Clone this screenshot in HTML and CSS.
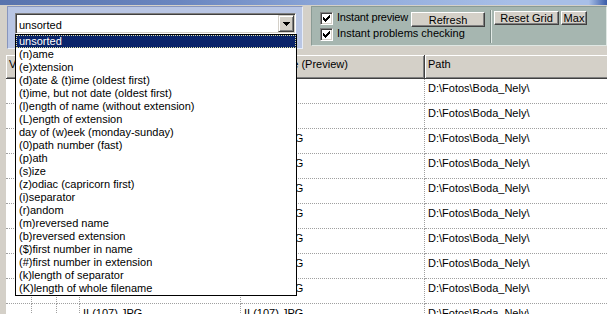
FILE: index.html
```html
<!DOCTYPE html>
<html>
<head>
<meta charset="utf-8">
<link rel="stylesheet" href="styles.css">
</head>
<body>
<div class="titlebar"></div>
<div class="toolbar">
  <div class="panel-sort">
    <div class="combo-wrap">
      <div class="combo">
        <span class="combo-text">unsorted</span>
        <span class="combo-btn"><svg width="14" height="15" viewBox="0 0 14 15"><path d="M4 6h7v1h-1v1h-1v1h-1v1h-1v-1h-1v-1h-1v-1h-1z" fill="#000"/></svg></span>
      </div>
      <ul class="dropdown">
        <li class="sel">unsorted</li>
        <li>(n)ame</li>
        <li>(e)xtension</li>
        <li>(d)ate &amp; (t)ime (oldest first)</li>
        <li>(t)ime, but not date (oldest first)</li>
        <li>(l)ength of name (without extension)</li>
        <li>(L)ength of extension</li>
        <li>day of (w)eek (monday-sunday)</li>
        <li>(0)path number (fast)</li>
        <li>(p)ath</li>
        <li>(s)ize</li>
        <li>(z)odiac (capricorn first)</li>
        <li>(i)separator</li>
        <li>(r)andom</li>
        <li>(m)reversed name</li>
        <li>(b)reversed extension</li>
        <li>($)first number in name</li>
        <li>(#)first number in extension</li>
        <li>(k)length of separator</li>
        <li>(K)length of whole filename</li>
      </ul>
    </div>
  </div>
  <div class="panel-opts">
    <div class="opts-left">
      <div class="opt-row">
        <span class="cb"><svg width="13" height="13" viewBox="0 0 13 13"><path d="M3 5h1v1h1v1h1v-1h1v-1h1v-1h1v-1h1v3h-1v1h-1v1h-1v1h-1v1h-1v-1h-1v-1h-1z" fill="#000"/></svg></span>
        <span class="opt-label opt-label-short">Instant preview</span>
        <button class="btn btn-refresh">Refresh</button>
      </div>
      <div class="opt-row opt-row2">
        <span class="cb"><svg width="13" height="13" viewBox="0 0 13 13"><path d="M3 5h1v1h1v1h1v-1h1v-1h1v-1h1v-1h1v3h-1v1h-1v1h-1v1h-1v1h-1v-1h-1v-1h-1z" fill="#000"/></svg></span>
        <span class="opt-label">Instant problems checking</span>
      </div>
    </div>
    <div class="opts-div"></div>
    <div class="opts-right">
      <button class="btn btn-reset">Reset Grid</button>
      <button class="btn btn-max">Max</button>
    </div>
  </div>
</div>
<div class="grid">
  <div class="row head">
    <div class="cell">V</div><div class="cell"></div><div class="cell"></div><div class="cell">Old Name</div><div class="cell">New Name (Preview)</div><div class="cell">Path</div>
  </div>
  <div class="row"><div class="cell"></div><div class="cell"></div><div class="cell"></div><div class="cell"></div><div class="cell"></div><div class="cell">D:\Fotos\Boda_Nely\</div></div>
  <div class="row"><div class="cell"></div><div class="cell"></div><div class="cell"></div><div class="cell"></div><div class="cell"></div><div class="cell">D:\Fotos\Boda_Nely\</div></div>
  <div class="row"><div class="cell"></div><div class="cell"></div><div class="cell"></div><div class="cell"></div><div class="cell">II (100).JPG</div><div class="cell">D:\Fotos\Boda_Nely\</div></div>
  <div class="row"><div class="cell"></div><div class="cell"></div><div class="cell"></div><div class="cell"></div><div class="cell">II (101).JPG</div><div class="cell">D:\Fotos\Boda_Nely\</div></div>
  <div class="row"><div class="cell"></div><div class="cell"></div><div class="cell"></div><div class="cell"></div><div class="cell">II (102).JPG</div><div class="cell">D:\Fotos\Boda_Nely\</div></div>
  <div class="row"><div class="cell"></div><div class="cell"></div><div class="cell"></div><div class="cell"></div><div class="cell">II (103).JPG</div><div class="cell">D:\Fotos\Boda_Nely\</div></div>
  <div class="row"><div class="cell"></div><div class="cell"></div><div class="cell"></div><div class="cell"></div><div class="cell">II (104).JPG</div><div class="cell">D:\Fotos\Boda_Nely\</div></div>
  <div class="row"><div class="cell"></div><div class="cell"></div><div class="cell"></div><div class="cell"></div><div class="cell">II (105).JPG</div><div class="cell">D:\Fotos\Boda_Nely\</div></div>
  <div class="row"><div class="cell"></div><div class="cell"></div><div class="cell"></div><div class="cell"></div><div class="cell">II (106).JPG</div><div class="cell">D:\Fotos\Boda_Nely\</div></div>
  <div class="row"><div class="cell"></div><div class="cell"></div><div class="cell"></div><div class="cell">II (107).JPG</div><div class="cell">II (107).JPG</div><div class="cell">D:\Fotos\Boda_Nely\</div></div>
</div>
</body>
</html>
```
FILE: styles.css
```css
* { box-sizing: border-box; }
html, body { margin: 0; padding: 0; }
body {
  width: 607px;
  height: 314px;
  overflow: hidden;
  background: #d4d0c8;
  color: #000;
  font: 11px/13px "Liberation Sans", Arial, sans-serif;
}
.titlebar {
  height: 5px;
  background: linear-gradient(90deg, #5873ad 0%, #6a86c0 30%, #8ea8d9 55%, #a8bfe7 85%, #a8bfe7 97%, #3a5ca8 100%);
}
.toolbar {
  display: flex;
  align-items: flex-start;
  padding-top: 1px;
}
.panel-sort {
  margin-left: 7px;
  width: 296px;
  height: 43px;
  background: #b9c6e4;
  border: 1px solid;
  border-color: #8795bd #e6ecf8 #e6ecf8 #8795bd;
  padding: 6px 0 0 7px;
}
.combo-wrap {
  position: relative;
  width: 281px;
}
.combo {
  display: flex;
  height: 21px;
  background: #fff;
  border: 1px solid;
  border-color: #808080 #fff #fff #808080;
  box-shadow: inset 1px 1px #404040, inset -1px -1px #d4d0c8;
  padding: 1px;
}
.combo-text {
  flex: 1;
  padding: 4px 0 0 2px;
  white-space: nowrap;
}
.combo-btn {
  width: 16px;
  height: 17px;
  background: #d4d0c8;
  border: 1px solid;
  border-color: #d4d0c8 #404040 #404040 #d4d0c8;
  box-shadow: inset 1px 1px #fff, inset -1px -1px #808080;
}
.combo-btn svg { display: block; }
.dropdown {
  position: absolute;
  left: 0;
  top: 21px;
  width: 282px;
  margin: 0;
  padding: 0;
  list-style: none;
  background: #fff;
  border: 1px solid #000;
  z-index: 5;
}
.dropdown li {
  height: 13px;
  padding-left: 3px;
  white-space: nowrap;
}
.dropdown li.sel {
  background: #0a246a;
  color: #fff;
  outline: 1px dotted #e0e0a0;
  outline-offset: -1px;
}
.panel-opts {
  margin-left: 8px;
  flex: 1;
  height: 40px;
  display: flex;
  background: #a6b6b0;
  border: 1px solid;
  border-color: #8a9b95 #dfe7e3 #dfe7e3 #8a9b95;
}
.opts-left {
  flex: none;
  width: 178px;
  padding: 5px 5px 0 8px;
}
.opt-row {
  display: flex;
  align-items: flex-start;
  height: 15px;
}
.opt-row2 { margin-top: 1px; }
.cb {
  flex: none;
  width: 13px;
  height: 13px;
  background: #fff;
  border: 1px solid;
  border-color: #808080 #fff #fff #808080;
  box-shadow: inset 1px 1px #404040, inset -1px -1px #d4d0c8;
}
.cb svg { display: block; margin: -1px; }
.opt-label {
  margin-left: 4px;
  margin-top: -1px;
  white-space: nowrap;
}
.opt-label-short {
  flex: 0 1 auto;
  min-width: 0;
  letter-spacing: -0.2px;
}
.opts-div {
  flex: none;
  width: 2px;
  margin: 3px 0 2px;
  border-left: 1px solid #7c8c87;
  border-right: 1px solid #e2eae6;
}
.opts-right {
  display: flex;
  gap: 2px;
  padding: 4px 0 0 2px;
}
.btn {
  flex: none;
  margin: 0;
  padding: 0;
  font: 11px/12px "Liberation Sans", Arial, sans-serif;
  color: #000;
  background: #d4d0c8;
  border: 1px solid;
  border-color: #fff #404040 #404040 #fff;
  box-shadow: inset -1px -1px #808080;
  border-radius: 0;
}
.btn-refresh { width: 74px; height: 15px; margin-left: auto; }
.btn-reset { width: 65px; height: 14px; }
.btn-max { width: 26px; height: 14px; }
.grid {
  margin: 6px 0 0 6px;
}
.row {
  display: grid;
  grid-template-columns: 26px 25px 23px 161px 184px 200px;
}
.cell {
  height: 25px;
  padding: 3px 3px 0;
  background: #fff;
  border-right: 1px dotted #a0a0a0;
  border-bottom: 1px dotted #a0a0a0;
  white-space: nowrap;
  overflow: hidden;
}
.head .cell {
  height: 24px;
  padding-top: 3px;
  background: #d4d0c8;
  border-right: 1px solid #404040;
  border-bottom: 1px solid #404040;
  box-shadow: inset 1px 1px #fff, inset -1px -1px #808080;
}
```
